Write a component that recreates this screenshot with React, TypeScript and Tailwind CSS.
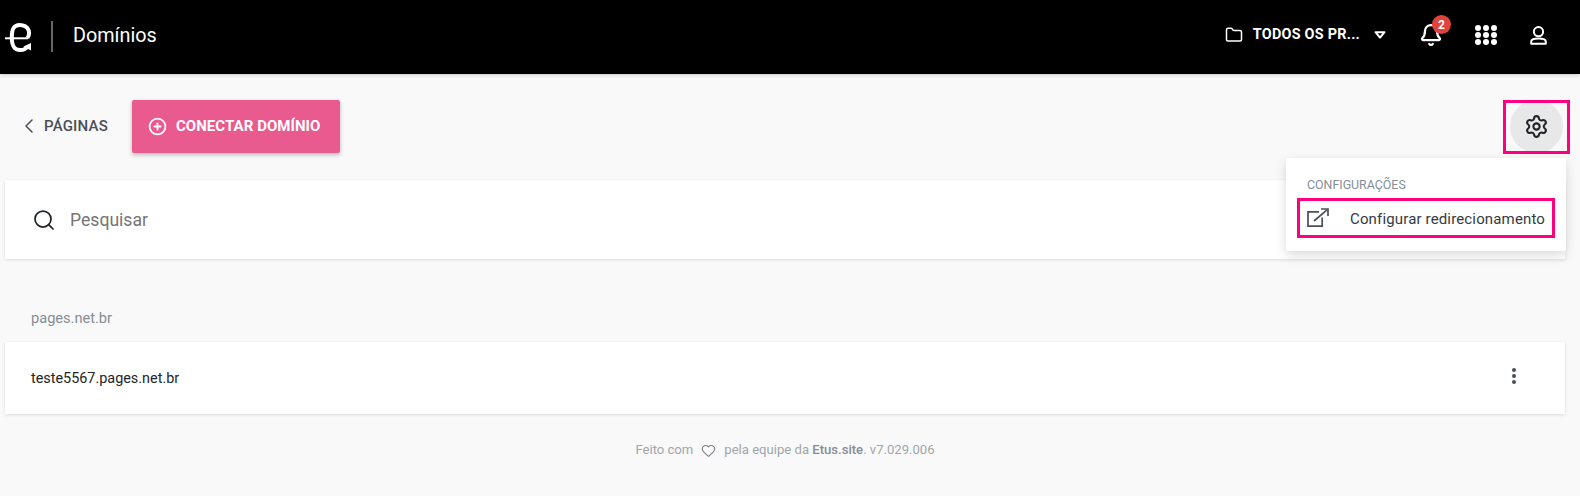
import React from 'react';
import { Bell, ChevronLeft, CirclePlus, Folder, Heart, Search, Settings } from 'lucide-react';

// Etus logo, drawn by hand
const Logo = () => (
  <svg width="28" height="32" viewBox="0 0 28 32" fill="none" stroke="currentColor">
    <path d="M1 16.3 H24" strokeWidth="2" />
    <path d="M23.5 16 C26.5 11.5 25.5 3 15.5 3 C8.5 3 7.8 9 7.8 15 C7.8 24 10 28 16 28 C19 28 21.5 27.5 23 25" strokeWidth="4" />
    <path d="M19.5 24.5 L27 21 L27 28.5 Z" fill="currentColor" stroke="none" />
  </svg>
);

const AppsGrid = () => (
  <div className="grid grid-cols-3 gap-x-[2px] gap-y-[1px] w-[22px]">
    {Array.from({ length: 9 }).map((_, i) => (
      <span key={i} className="w-[6px] h-[6px] rounded-full bg-white" />
    ))}
  </div>
);

const UserIcon = () => (
  <svg width="17" height="19" viewBox="0 0 17 19" fill="none" stroke="currentColor" strokeWidth="2">
    <circle cx="8.5" cy="5.7" r="4.6" />
    <path d="M1.2 17.8 V15.6 C1.2 13.5 3.5 12.4 8.5 12.4 C13.5 12.4 15.8 13.5 15.8 15.6 V17.8 Z" strokeLinejoin="round" />
  </svg>
);

const ExternalIcon = () => (
  <svg width="22" height="20" viewBox="0 0 22 20" fill="none" stroke="#495057" strokeWidth="1.7">
    <path d="M12 3.9 H1 V18.2 H15.2 V9.5" />
    <path d="M7 13 L20 1.8" />
    <path d="M14 1 H21 V8" />
  </svg>
);

const Header = () => (
  <header className="h-[74px] pb-[4px] bg-black flex items-center text-white shadow-[0_1px_4px_rgba(0,0,0,0.2)]">
    <div className="ml-[4px] mt-[5px] w-[28px] h-[32px] flex">
      <Logo />
    </div>
    <div className="ml-[19px] mt-[2px] w-[2px] h-[31px] bg-[#666]" />
    <h1 className="ml-[20px] mt-[1px] text-[19.8px] leading-none">Domínios</h1>
    <div className="ml-auto flex items-center">
      <Folder className="w-[18px] h-[18px]" strokeWidth={2} />
      <span className="ml-[10px] text-[14.4px] font-bold tracking-[0.25px]">TODOS OS PR...</span>
      <svg className="ml-[14px]" width="12" height="8" viewBox="0 0 12 8" fill="none" stroke="currentColor" strokeWidth="2" strokeLinejoin="round">
        <path d="M1.5 1.2 H10.5 L6 6.6 Z" />
      </svg>
      <div className="ml-[33px] relative">
        <Bell className="w-[24px] h-[24px]" strokeWidth={2.25} />
        <span className="absolute left-[13px] top-[-8px] w-[19px] h-[19px] rounded-full bg-[#e0433a] text-[12px] font-bold flex items-center justify-center">2</span>
      </div>
      <div className="ml-[32px]">
        <AppsGrid />
      </div>
      <div className="ml-[33px] mr-[33px] flex">
        <UserIcon />
      </div>
    </div>
  </header>
);

const Toolbar = () => (
  <div className="relative h-[106px] pt-[26px] flex items-start">
    <button className="ml-[17px] mt-[14px] h-[24px] flex items-center text-[#495057] text-[15px] font-medium tracking-[0.2px]">
      <ChevronLeft className="w-[24px] h-[24px]" strokeWidth={1.5} />
      <span className="ml-[3px]">PÁGINAS</span>
    </button>
    <button className="ml-[24px] w-[208px] h-[53px] pl-[16px] bg-[#e95a8f] rounded-[2px] text-white text-[15px] font-bold tracking-[0.05px] flex items-center shadow-[0_2px_4px_rgba(0,0,0,0.25)]">
      <CirclePlus className="w-[19px] h-[19px]" strokeWidth={2.25} />
      <span className="ml-[9px]">CONECTAR DOMÍNIO</span>
    </button>
    <div className="relative ml-auto mr-[10px] w-[67px] h-[54px] flex justify-center">
      <div className="w-[53px] h-[53px] rounded-full bg-[#e8e8e8] flex items-center justify-center">
        <Settings className="w-[25px] h-[25px] text-[#212529]" strokeWidth={2} />
      </div>
      <span className="absolute inset-0 border-[3px] border-[#ff0080]" />
    </div>
    <div className="absolute z-10 right-[14px] top-[84px] w-[280px] h-[93px] bg-white rounded-[2px] shadow-[0_4px_12px_rgba(0,0,0,0.15)] px-[11px] pt-[20px]">
      <div className="pl-[10px] text-[12.4px] leading-[14px] text-[#868e96]">CONFIGURAÇÕES</div>
      <div className="mt-[6px] h-[40px] border-[3px] border-[#ff0080] flex items-center">
        <div className="ml-[7px] flex">
          <ExternalIcon />
        </div>
        <span className="ml-[21px] mt-[3px] text-[15px] text-[#343a40] tracking-[0.15px]">Configurar redirecionamento</span>
      </div>
    </div>
  </div>
);

export default function App() {
  return (
    <div className="w-[1580px] h-[496px] overflow-hidden bg-[#f9f9f9] font-['Roboto',sans-serif]">
      <Header />
      <Toolbar />
      <main className="pl-[5px] pr-[15px]">
        <div className="h-[79px] bg-white flex items-center shadow-[0_1px_3px_rgba(0,0,0,0.12)]">
          <Search className="ml-[27px] w-[24px] h-[24px] text-[#212529]" strokeWidth={1.75} />
          <span className="ml-[14px] mt-[1px] text-[17.6px] text-[#757575]">Pesquisar</span>
        </div>
        <div className="mt-[51px] ml-[26px] text-[14.6px] leading-[16px] text-[#868e96]">pages.net.br</div>
        <div className="mt-[16px] h-[72px] bg-white flex items-center justify-between shadow-[0_1px_3px_rgba(0,0,0,0.12)]">
          <span className="ml-[26px] mt-[2px] text-[14.4px] text-[#212529]">teste5567.pages.net.br</span>
          <div className="mr-[49px] mb-[5px] flex flex-col gap-[2px]">
            <span className="w-[4px] h-[4px] rounded-full bg-[#495057]" />
            <span className="w-[4px] h-[4px] rounded-full bg-[#495057]" />
            <span className="w-[4px] h-[4px] rounded-full bg-[#495057]" />
          </div>
        </div>
      </main>
      <footer className="mt-[28px] pr-[10px] flex items-center justify-center text-[13.1px] leading-[16px] text-[#a1a6ab]">
        <span>Feito com</span>
        <Heart className="mx-[8px] w-[15px] h-[15px] text-[#7b8085]" strokeWidth={1.75} />
        <span>pela equipe da <b className="font-medium text-[#868e96]">Etus.site</b>. v7.029.006</span>
      </footer>
    </div>
  );
}
